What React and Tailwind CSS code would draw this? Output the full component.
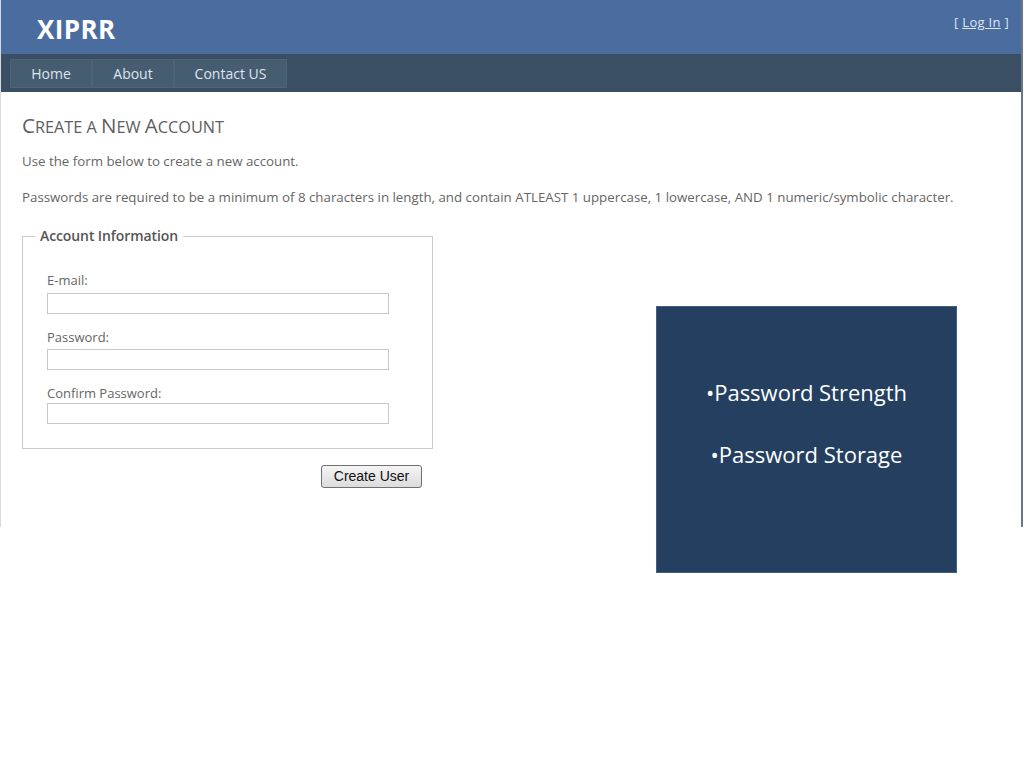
import React from "react";

export default function App() {
  const font = { fontFamily: '"Open Sans", "Noto Sans", sans-serif' };
  return (
    <div className="w-[1024px] h-[768px] bg-white relative overflow-hidden" style={font}>
      <div className="w-[1023px] h-[527px] border-l border-[#d6d9dd] border-r-2 border-r-[#6b7785] flex flex-col">
        <div className="h-[54px] bg-[#4b6c9e] flex items-start justify-between pl-[36px] pr-[12px]">
          <div className="text-white font-bold text-[26px] leading-none mt-[16px] tracking-[0.4px]" style={{ fontFamily: '"Open Sans", sans-serif' }}>XIPRR</div>
          <div className="text-[13px] text-[#dfe6ef] mt-[13px] tracking-[0.3px]">
            [ <span className="underline">Log In</span> ]
          </div>
        </div>
        <div className="h-[38px] bg-[#3a4f63] flex items-start pl-[9px] pt-[5px]">
          <div className="h-[29px] w-[82px] bg-[#465c71] border border-[#4f6378] text-[#dde4ec] text-[14px] flex items-center justify-center">Home</div>
          <div className="h-[29px] w-[82px] bg-[#465c71] border border-[#4f6378] text-[#dde4ec] text-[14px] flex items-center justify-center">About</div>
          <div className="h-[29px] w-[113px] bg-[#465c71] border border-[#4f6378] text-[#dde4ec] text-[14px] flex items-center justify-center">Contact US</div>
        </div>
        <div className="flex-1 pl-[21px] pt-[20px] text-[#666666]">
          <div className="text-[18px] leading-[26px] uppercase text-[#5e5e5e] font-medium" style={{ fontVariant: "small-caps" }}>
            <span className="text-[20.5px]">C</span><span className="text-[16.3px]">reate a </span><span className="text-[20.5px]">N</span><span className="text-[16.3px]">ew </span><span className="text-[20.5px]">A</span><span className="text-[16.3px]">ccount</span>
          </div>
          <p className="text-[13.3px] leading-[16px] mt-[13px]">Use the form below to create a new account.</p>
          <p className="text-[13.3px] leading-[16px] mt-[20px]">Passwords are required to be a minimum of 8 characters in length, and contain ATLEAST 1 uppercase, 1 lowercase, AND 1 numeric/symbolic character.</p>
          <div className="mt-[23px] w-[411px] relative">
            <fieldset className="border border-[#cccccc] m-0 p-0" style={{ borderStyle: "solid" }}>
              <legend className="ml-[12px] px-[5px] text-[14px] font-semibold text-[#555555] leading-[16px] tracking-[-0.1px]">Account Information</legend>
              <div className="pl-[24px] pt-[28px] pb-[24px]">
                <label className="block text-[13px] leading-[16px] text-[#666666]">E-mail:</label>
                <div className="mt-[5px] w-[342px] h-[21px] border border-[#c8c8c8] bg-white"></div>
                <label className="block text-[13px] leading-[16px] text-[#666666] mt-[15px]">Password:</label>
                <div className="mt-[4px] w-[342px] h-[21px] border border-[#c8c8c8] bg-white"></div>
                <label className="block text-[13px] leading-[16px] text-[#666666] mt-[15px]">Confirm Password:</label>
                <div className="mt-[2px] w-[342px] h-[21px] border border-[#c8c8c8] bg-white"></div>
              </div>
            </fieldset>
            <div className="flex justify-end pr-[11px] mt-[16px]">
              <div className="w-[101px] h-[23px] rounded-[3px] border border-[#707070] bg-gradient-to-b from-[#f5f5f5] to-[#dcdcdc] text-[14px] text-[#111] flex items-center justify-center" style={{ fontFamily: '"Liberation Sans", Arial, sans-serif' }}>Create User</div>
            </div>
          </div>
        </div>
      </div>
      <div className="absolute left-[656px] top-[306px] w-[301px] h-[267px] bg-[#243f60] border border-[#3f5f86] flex flex-col items-center pt-[70px] text-white text-[22px] leading-[30px]" style={{ fontFamily: '"Open Sans", "Noto Sans", sans-serif' }}>
        <div>•Password Strength</div>
        <div className="mt-[32px]">•Password Storage</div>
      </div>
    </div>
  );
}
